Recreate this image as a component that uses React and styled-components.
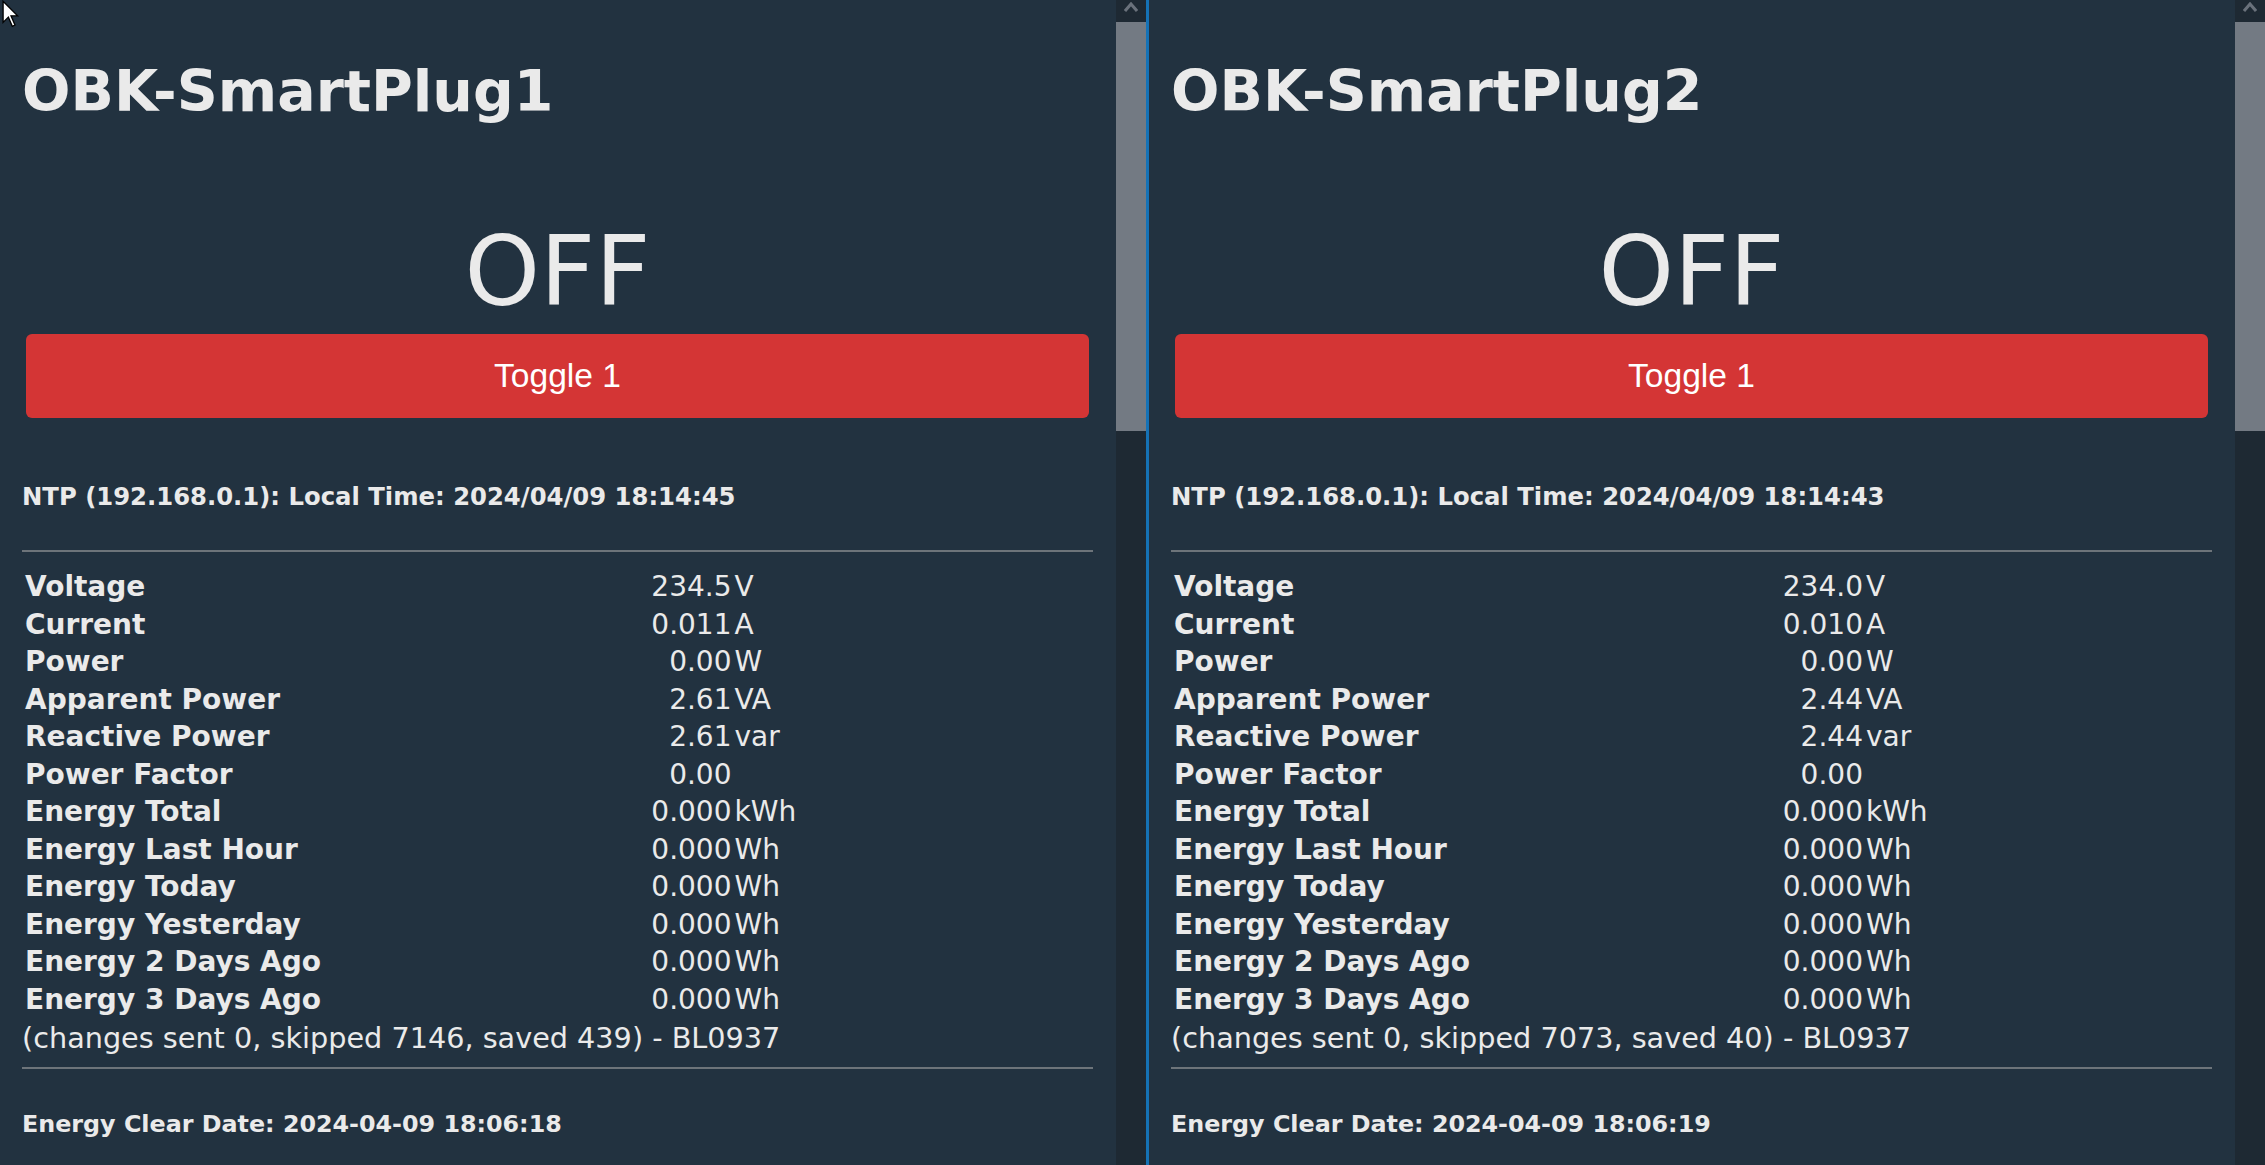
import React from 'react'
import styled, { createGlobalStyle } from 'styled-components'

const GlobalStyle = createGlobalStyle`
  html, body {
    margin: 0;
    padding: 0;
    overflow: hidden;
    background: #223240;
  }
  body {
    font-family: "DejaVu Sans", Verdana, sans-serif;
    color: #eaeaea;
  }
`

const Page = styled.div`
  position: relative;
  display: flex;
  width: 2265px;
  height: 1165px;
  background: #223240;
  overflow: hidden;
`

const Pane = styled.div`
  display: flex;
  flex: ${p => (p.$fixed ? '0 0 1146px' : '1 1 auto')};
  min-width: 0;
  height: 100%;
`

const Divider = styled.div`
  flex: 0 0 3px;
  background: #1572b6;
`

const Content = styled.div`
  flex: 1 1 auto;
  min-width: 0;
  display: flex;
  flex-direction: column;
  padding: 0 23px 0 22px;
`

const Title = styled.h1`
  margin: 58px 0 0;
  font-size: 57px;
  line-height: 66px;
  font-weight: bold;
`

const State = styled.div`
  margin-top: 92px;
  font-size: 96px;
  line-height: 112px;
  text-align: center;
`

const ToggleButton = styled.button`
  margin: 6px 4px 0;
  height: 84px;
  border: 0;
  border-radius: 6px;
  background: #d43535;
  color: #fff;
  font-family: "Liberation Sans", Arial, sans-serif;
  font-size: 33.6px;
  cursor: pointer;
`

const Info = styled.div`
  margin-top: ${p => p.$top}px;
  font-size: ${p => p.$size || 24.3}px;
  line-height: 28px;
  font-weight: bold;
  white-space: nowrap;
`

const Rule = styled.hr`
  margin: ${p => p.$top}px 0 0;
  border: 0;
  border-top: 2px solid #6d747a;
  height: 0;
`

const Table = styled.table`
  margin-top: 15px;
  width: 100%;
  table-layout: fixed;
  border-collapse: separate;
  border-spacing: 3px;
  font-size: 28px;
`

const Cell = styled.td`
  padding: 0;
  line-height: 34.5px;
  white-space: nowrap;
  font-weight: ${p => (p.$label ? 'bold' : 'normal')};
  text-align: ${p => (p.$num ? 'right' : 'left')};
`

const Stats = styled.div`
  margin-top: 2px;
  font-size: 28.7px;
  line-height: 32px;
  white-space: nowrap;
`

const Scrollbar = styled.div`
  flex: 0 0 30px;
  display: flex;
  flex-direction: column;
  background: #1e2933;
`

const ScrollArrow = styled.div`
  height: 22px;
  display: flex;
  justify-content: center;
  padding-top: 2px;
  box-sizing: border-box;
`

const ScrollThumb = styled.div`
  height: 409px;
  background: #737a83;
`

const Cursor = styled.svg`
  position: absolute;
  left: 1px;
  top: 0;
  width: 20px;
  height: 29px;
`

const devices = [
  {
    name: 'OBK-SmartPlug1',
    time: '2024/04/09 18:14:45',
    values: ['234.5', '0.011', '0.00', '2.61', '2.61', '0.00'],
    stats: '(changes sent 0, skipped 7146, saved 439) - BL0937',
    cleared: '2024-04-09 18:06:18'
  },
  {
    name: 'OBK-SmartPlug2',
    time: '2024/04/09 18:14:43',
    values: ['234.0', '0.010', '0.00', '2.44', '2.44', '0.00'],
    stats: '(changes sent 0, skipped 7073, saved 40) - BL0937',
    cleared: '2024-04-09 18:06:19'
  }
]

const labels = [
  ['Voltage', 'V'],
  ['Current', 'A'],
  ['Power', 'W'],
  ['Apparent Power', 'VA'],
  ['Reactive Power', 'var'],
  ['Power Factor', ''],
  ['Energy Total', 'kWh'],
  ['Energy Last Hour', 'Wh'],
  ['Energy Today', 'Wh'],
  ['Energy Yesterday', 'Wh'],
  ['Energy 2 Days Ago', 'Wh'],
  ['Energy 3 Days Ago', 'Wh']
]

function ScrollBar () {
  return (
    <Scrollbar>
      <ScrollArrow>
        <svg width="14" height="10" viewBox="0 0 14 10">
          <path d="M1 9 L7 2 L13 9" fill="none" stroke="#6a717b" strokeWidth="3" />
        </svg>
      </ScrollArrow>
      <ScrollThumb />
    </Scrollbar>
  )
}

function Device ({ d }) {
  return (
    <Content>
      <Title>{d.name}</Title>
      <State>OFF</State>
      <ToggleButton>Toggle 1</ToggleButton>
      <Info $top={65}>NTP (192.168.0.1): Local Time: {d.time}</Info>
      <Rule $top={39} />
      <Table>
        <colgroup>
          <col style={{ width: '58.5%' }} />
          <col style={{ width: '84px' }} />
          <col />
        </colgroup>
        <tbody>
          {labels.map(([label, unit], i) => (
            <tr key={label}>
              <Cell $label>{label}</Cell>
              <Cell $num>{i < 6 ? d.values[i] : '0.000'}</Cell>
              <Cell>{unit}</Cell>
            </tr>
          ))}
        </tbody>
      </Table>
      <Stats>{d.stats}</Stats>
      <Rule $top={13} />
      <Info $top={41} $size={23.8}>Energy Clear Date: {d.cleared}</Info>
    </Content>
  )
}

export default function App () {
  return (
    <Page>
      <GlobalStyle />
      <Pane $fixed>
        <Device d={devices[0]} />
        <ScrollBar />
      </Pane>
      <Divider />
      <Pane>
        <Device d={devices[1]} />
        <ScrollBar />
      </Pane>
      <Cursor viewBox="0 0 14 22">
        <path d="M1 1 L1 17 L5 13 L8 20 L10 19 L7 12 L12 12 Z" fill="#fff" stroke="#000" strokeWidth="1" />
      </Cursor>
    </Page>
  )
}
